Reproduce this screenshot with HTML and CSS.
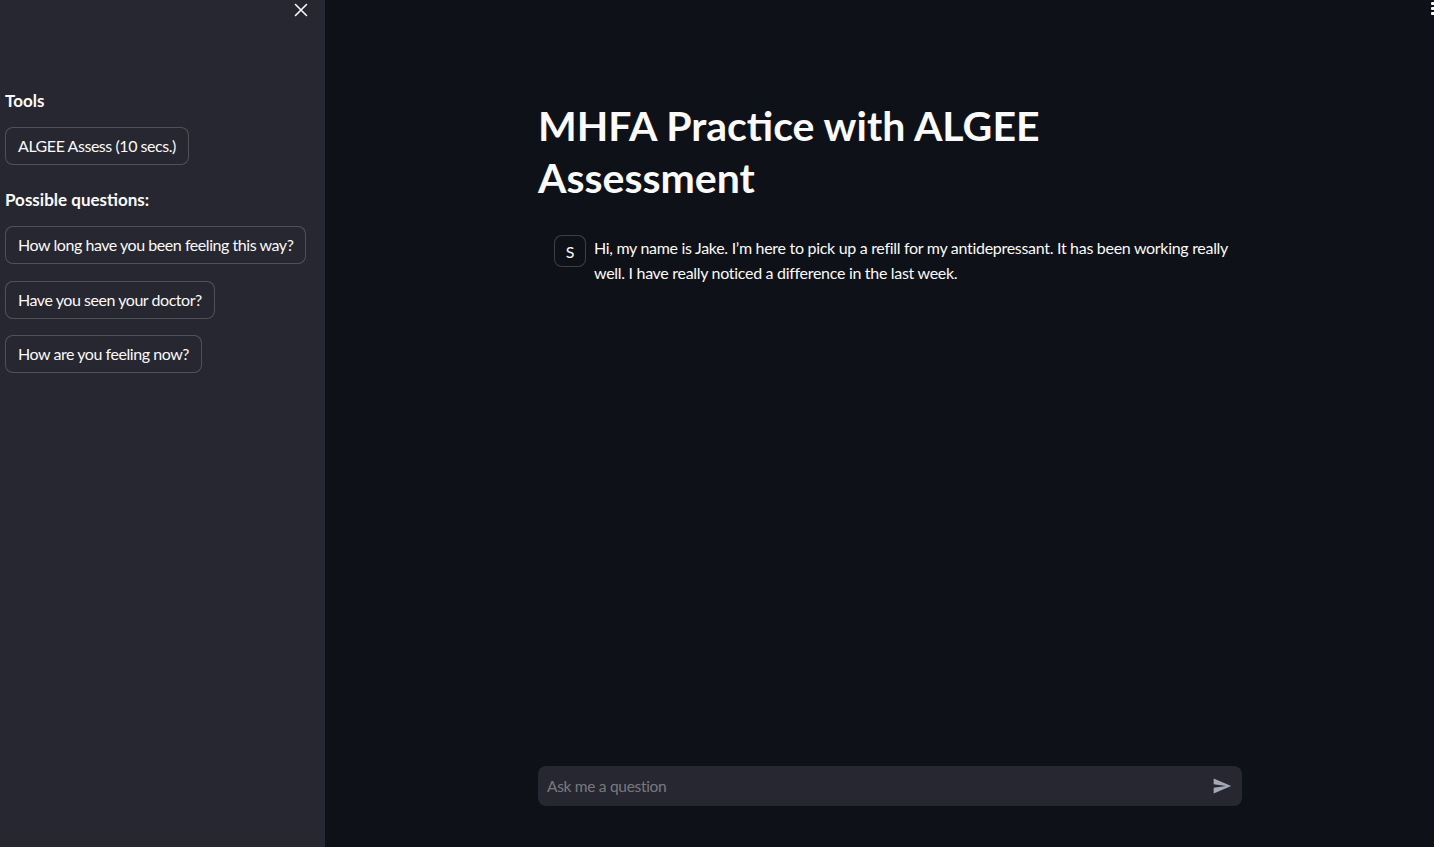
FILE: index.html
```html
<!DOCTYPE html>
<html lang="en">
<head>
<meta charset="utf-8">
<title>MHFA Practice with ALGEE Assessment</title>
<link rel="stylesheet" href="styles.css">
</head>
<body>
<div class="app">
  <aside class="sidebar">
    <button class="close-btn" aria-label="Close sidebar">
      <svg width="14" height="14" viewBox="0 0 14 14"><path d="M1.5 1.5L12.5 12.5M12.5 1.5L1.5 12.5" stroke="#fafafa" stroke-width="1.6" stroke-linecap="round"/></svg>
    </button>
    <h3 class="side-heading first">Tools</h3>
    <div class="btn-list">
      <button class="st-btn">ALGEE Assess (10 secs.)</button>
    </div>
    <h3 class="side-heading second">Possible questions:</h3>
    <div class="btn-list">
      <button class="st-btn">How long have you been feeling this way?</button>
      <button class="st-btn">Have you seen your doctor?</button>
      <button class="st-btn">How are you feeling now?</button>
    </div>
  </aside>
  <main class="main">
    <div class="menu-dots"><span></span><span></span><span></span></div>
    <div class="content">
      <h1 class="title">MHFA Practice with ALGEE Assessment</h1>
      <div class="chat-msg">
        <div class="avatar">S</div>
        <p class="msg-text">Hi, my name is Jake. I’m here to pick up a refill for my antidepressant. It has been working really well. I have really noticed a difference in the last week.</p>
      </div>
    </div>
    <div class="input-wrap">
      <div class="chat-input">
        <span class="placeholder">Ask me a question</span>
        <svg class="send" width="20" height="20" viewBox="0 0 24 24"><path d="M2.01 21L23 12 2.01 3 2 10l15 2-15 2z" fill="#a3a8b8"/></svg>
      </div>
    </div>
  </main>
</div>
</body>
</html>
```

FILE: styles.css
```css
* { box-sizing: border-box; }
html, body {
  margin: 0;
  padding: 0;
  height: 100%;
  background: #0e1117;
  color: #fafafa;
  font-family: Lato, "Noto Sans", sans-serif;
}
.app {
  display: flex;
  height: 847px;
  overflow: hidden;
}
.sidebar {
  width: 325px;
  flex: none;
  background: #262730;
  position: relative;
  padding: 89px 5px 0;
}
.close-btn {
  position: absolute;
  top: 3px;
  left: 294px;
  width: 14px;
  height: 14px;
  padding: 0;
  border: 0;
  background: none;
  display: flex;
}
.side-heading {
  margin: 0;
  font-size: 17px;
  font-weight: 700;
  line-height: 24px;
}
.side-heading.first { margin-bottom: 14px; }
.side-heading.second { margin-top: 23px; margin-bottom: 14px; }
.btn-list {
  display: flex;
  flex-direction: column;
  align-items: flex-start;
  gap: 16.5px;
}
.st-btn {
  height: 38px;
  padding: 0 12px;
  border: 1px solid rgba(250, 250, 250, 0.2);
  border-radius: 8px;
  background: #262730;
  color: #fafafa;
  font-family: Lato, "Noto Sans", sans-serif;
  font-size: 16px;
  letter-spacing: -0.45px;
  line-height: 1;
}
.main {
  flex: 1;
  position: relative;
  display: flex;
  flex-direction: column;
  padding-left: 213px;
}
.menu-dots {
  position: absolute;
  top: 2px;
  right: -1px;
  display: flex;
  flex-direction: column;
  gap: 2px;
}
.menu-dots span {
  width: 4px;
  height: 3px;
  background: #fafafa;
  border-radius: 1px;
}
.content {
  width: 704px;
  flex: 1;
  padding-top: 100px;
}
.title {
  margin: 0;
  font-size: 41px;
  font-weight: 700;
  line-height: 52px;
  letter-spacing: 0;
}
.chat-msg {
  display: flex;
  gap: 8px;
  padding: 16px 0 16px 16px;
  margin-top: 15px;
}
.avatar {
  flex: none;
  width: 32px;
  height: 32px;
  border: 1px solid rgba(250, 250, 250, 0.2);
  border-radius: 8px;
  display: flex;
  align-items: center;
  justify-content: center;
  font-size: 16px;
  background: #0e1117;
}
.msg-text {
  margin: 0;
  font-size: 16px;
  line-height: 25px;
  letter-spacing: -0.3px;
}
.input-wrap {
  width: 704px;
  padding-bottom: 41px;
}
.chat-input {
  height: 40px;
  background: #262730;
  border-radius: 8px;
  display: flex;
  align-items: center;
  justify-content: space-between;
  padding: 0 10px 0 9px;
}
.placeholder {
  font-size: 15.5px;
  color: rgba(250, 250, 250, 0.4);
  letter-spacing: -0.3px;
}
.send { display: block; }
```
